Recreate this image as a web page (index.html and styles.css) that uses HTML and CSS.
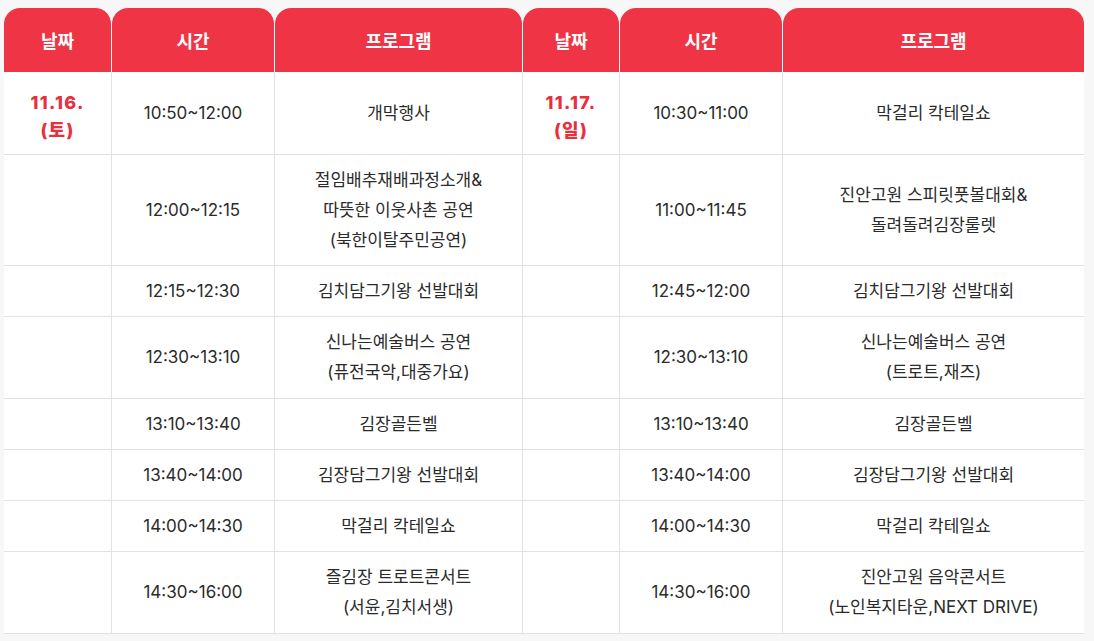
FILE: index.html
```html
<!DOCTYPE html>
<html lang="ko">
<head>
<meta charset="utf-8">
<title>일정표</title>
<link rel="stylesheet" href="styles.css">
</head>
<body>
<table class="schedule">
  <colgroup>
    <col class="c-date"><col class="c-time"><col class="c-prog">
    <col class="c-date2"><col class="c-time"><col class="c-prog2">
  </colgroup>
  <thead>
    <tr>
      <th>날짜</th><th>시간</th><th>프로그램</th>
      <th>날짜</th><th>시간</th><th>프로그램</th>
    </tr>
  </thead>
  <tbody>
    <tr class="r1">
      <td class="date">11.16.<br>(토)</td><td>10:50~12:00</td><td>개막행사</td>
      <td class="date">11.17.<br>(일)</td><td>10:30~11:00</td><td>막걸리 칵테일쇼</td>
    </tr>
    <tr>
      <td></td><td>12:00~12:15</td><td>절임배추재배과정소개&amp;<br>따뜻한 이웃사촌 공연<br>(북한이탈주민공연)</td>
      <td></td><td>11:00~11:45</td><td>진안고원 스피릿풋볼대회&amp;<br>돌려돌려김장룰렛</td>
    </tr>
    <tr>
      <td></td><td>12:15~12:30</td><td>김치담그기왕 선발대회</td>
      <td></td><td>12:45~12:00</td><td>김치담그기왕 선발대회</td>
    </tr>
    <tr class="two">
      <td></td><td>12:30~13:10</td><td>신나는예술버스 공연<br>(퓨전국악,대중가요)</td>
      <td></td><td>12:30~13:10</td><td>신나는예술버스 공연<br>(트로트,재즈)</td>
    </tr>
    <tr>
      <td></td><td>13:10~13:40</td><td>김장골든벨</td>
      <td></td><td>13:10~13:40</td><td>김장골든벨</td>
    </tr>
    <tr>
      <td></td><td>13:40~14:00</td><td>김장담그기왕 선발대회</td>
      <td></td><td>13:40~14:00</td><td>김장담그기왕 선발대회</td>
    </tr>
    <tr>
      <td></td><td>14:00~14:30</td><td>막걸리 칵테일쇼</td>
      <td></td><td>14:00~14:30</td><td>막걸리 칵테일쇼</td>
    </tr>
    <tr class="two">
      <td></td><td>14:30~16:00</td><td>즐김장 트로트콘서트<br>(서윤,김치서생)</td>
      <td></td><td>14:30~16:00</td><td>진안고원 음악콘서트<br>(노인복지타운,NEXT DRIVE)</td>
    </tr>
  </tbody>
</table>
</body>
</html>
```

FILE: styles.css
```css
html, body {
  margin: 0;
  padding: 0;
  background: #f7f7f7;
}
body {
  padding: 8px 10px 0 4px;
  font-family: Inter, "Noto Sans CJK KR", sans-serif;
  color: #2b2b2b;
}
.schedule {
  width: 1080px;
  border-collapse: separate;
  border-spacing: 0;
  table-layout: fixed;
}
.c-date { width: 108px; }
.c-time { width: 163px; }
.c-prog { width: 248px; }
.c-date2 { width: 97px; }
.c-prog2 { width: 301px; }
.schedule th {
  height: 64px;
  padding: 0;
  background: #ef3445;
  color: #fff;
  font-size: 18px;
  font-weight: 700;
  border-radius: 16px 16px 0 0;
  border-right: 1px solid #fff;
  box-sizing: border-box;
}
.schedule th:last-child { border-right: 0; }
.schedule td {
  background: #fff;
  text-align: center;
  vertical-align: middle;
  padding: 10px 0 10px;
  font-size: 17px;
  line-height: 30px;
  letter-spacing: 0;
  border-right: 1px solid #e2e2e2;
  border-bottom: 1px solid #e2e2e2;
}
.schedule td:last-child { border-right: 0; }
.schedule tr.two td { padding: 10px 0 11px; }
.schedule tr.r1 td { padding: 13px 0; }
.schedule tr.r1 td.date {
  color: #e8303f;
  font-weight: 800;
  font-size: 18px;
  line-height: 28px;
  letter-spacing: 1.3px;
  padding-top: 17px;
  padding-bottom: 9px;
}
```
